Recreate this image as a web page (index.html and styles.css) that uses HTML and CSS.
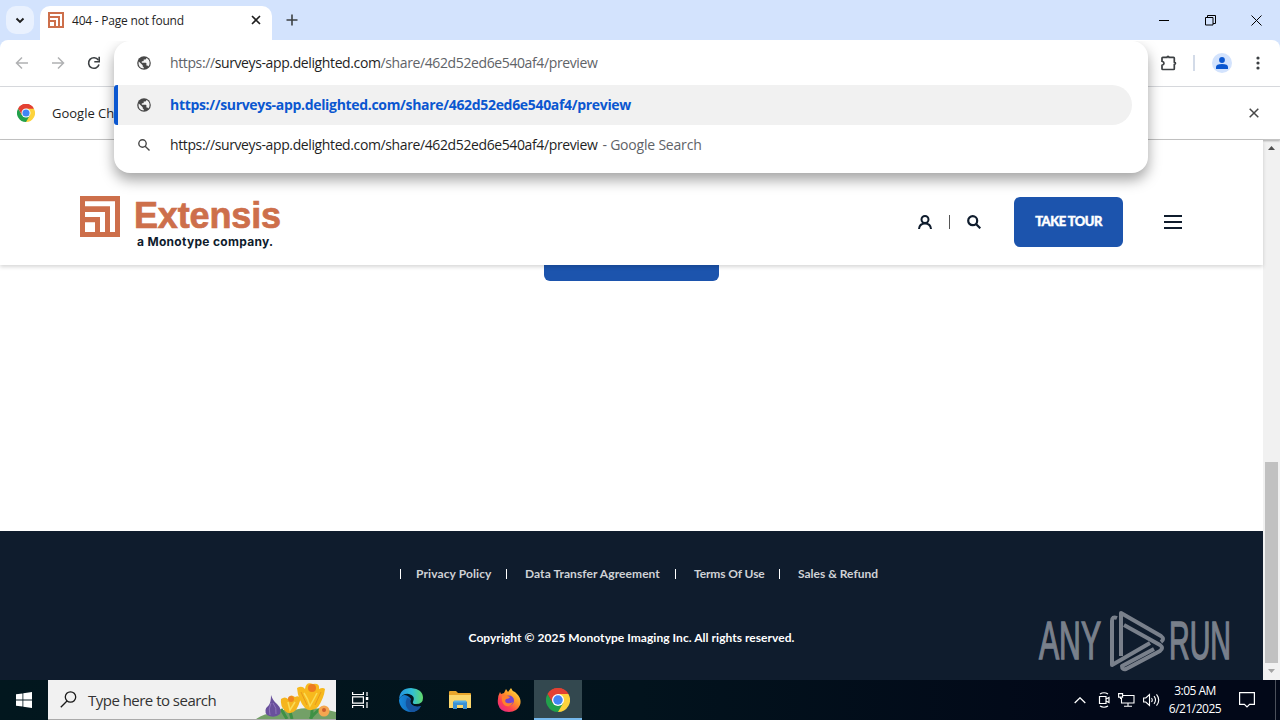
FILE: index.html
```html
<!DOCTYPE html>
<html lang="en">
<head>
    <meta charset="utf-8">
    <title>404 - Page not found</title>
    <link rel="stylesheet" href="styles.css">
</head>
<body>
    <div class="tabstrip">
        <button class="tab-search" aria-label="Search tabs">
            <svg width="10" height="7" viewBox="0 0 10 7"><path d="M1.5 1.5 5 5l3.500-3.500" fill="none" stroke="#1f1f1f" stroke-width="1.900"/></svg>
        </button>
        <div class="tab">
            <svg class="favicon" width="16" height="16" viewBox="0 0 40 40"><path d="M0 0h40v40H0z" fill="#cd6f4b"/><path d="M5 5h30v30h-5V10H5zM5 15h20v20h-5V20H5zM5 25h10v10H5z" fill="#fff"/></svg>
            <span class="tab-title">404 - Page not found</span>
            <svg class="tab-close" width="10" height="10" viewBox="0 0 10 10"><path d="M1 1l8 8M9 1 1 9" stroke="#1f1f1f" stroke-width="1.600"/></svg>
        </div>
        <svg class="new-tab" width="12" height="12" viewBox="0 0 12 12"><path d="M6 .5v11M.5 6h11" stroke="#3c4043" stroke-width="1.600"/></svg>
        <div class="window-buttons">
            <svg width="11" height="11" viewBox="0 0 11 11"><path d="M0 5.500h10" stroke="#000"/></svg>
            <svg width="11" height="11" viewBox="0 0 11 11"><path d="M.5 2.500h7.500v7.500H.5zM2.500 2.500v-2h8v8H8" fill="none" stroke="#000"/></svg>
            <svg width="11" height="11" viewBox="0 0 11 11"><path d="M.5.500l10 10M10.500.5l-10 10" stroke="#000"/></svg>
        </div>
    </div>

    <div class="toolbar">
        <div class="nav-buttons">
            <svg width="14" height="14" viewBox="0 0 14 14"><path d="M13 7H2M7 1.500 1.500 7 7 12.500" fill="none" stroke="#b0b1b3" stroke-width="1.500"/></svg>
            <svg width="14" height="14" viewBox="0 0 14 14"><path d="M1 7h11M7 1.500 12.500 7 7 12.500" fill="none" stroke="#b0b1b3" stroke-width="1.500"/></svg>
            <svg width="14" height="14" viewBox="0 0 14 14"><path d="M12 8.500A5.300 5.300 0 1 1 11.300 4" fill="none" stroke="#3c4043" stroke-width="1.600"/><path d="M12.200.7v5H7.300" fill="none" stroke="#3c4043" stroke-width="1.600"/></svg>
        </div>
        <div class="toolbar-right">
            <svg width="18" height="18" viewBox="0 0 18 18"><path d="M2.800 3.300h4.200q.2-1 1-1t1 1h4.500q.8 0 .8.800v4q1.200.2 1.200 1.200t-1.200 1.200v4.200q0 .8-.8.800H2.800q-.8 0-.8-.8v-3.400q2-.5 2-2T2 7.300V4.100q0-.8.800-.8z" fill="none" stroke="#3c4043" stroke-width="1.700"/></svg>
            <span class="toolbar-line"></span>
            <span class="avatar">
                <svg width="12" height="12" viewBox="0 0 12 12"><circle cx="6" cy="3" r="2.900" fill="#0b57d0"/><path d="M0 12v-2q0-3 6-3t6 3v2z" fill="#0b57d0"/></svg>
            </span>
            <svg width="4" height="14" viewBox="0 0 4 14" fill="#3c4043"><circle cx="2" cy="2" r="1.600"/><circle cx="2" cy="7" r="1.600"/><circle cx="2" cy="12" r="1.600"/></svg>
        </div>
    </div>

    <div class="infobar">
        <svg width="18" height="18" viewBox="0 0 48 48"><use href="#chrome"/></svg>
        <span class="infobar-text">Google Chrome</span>
        <svg class="infobar-close" width="10" height="10" viewBox="0 0 10 10"><path d="M.7.700l8.600 8.600M9.300.7.700 9.300" stroke="#474747" stroke-width="1.500"/></svg>
    </div>

    <div class="viewport">
        <div class="page">
            <header class="site-header">
                <div class="logo">
                    <svg width="40" height="41" viewBox="0 0 40 40" preserveAspectRatio="none"><path d="M0 0h40v40H0z" fill="#cd6f4b"/><path d="M5 5h30v30h-5V10H5zM5 15.500h20V35h-5V20.500H5zM5 25.500h10V35H5z" fill="#fff"/></svg>
                    <div class="logo-text">
                        <div class="logo-name">Extensis</div>
                        <div class="logo-tag">a Monotype company.</div>
                    </div>
                </div>
                <div class="site-actions">
                    <svg width="14" height="14" viewBox="0 0 14 14" fill="none" stroke="#0f1c2d" stroke-width="2"><circle cx="7" cy="4.500" r="3.500"/><path d="M1 14q.5-5.500 6-5.500t6 5.500"/></svg>
                    <span class="action-line"></span>
                    <svg width="14" height="14" viewBox="0 0 14 14" fill="none" stroke="#0f1c2d" stroke-width="2.200"><circle cx="5.700" cy="5.700" r="4.500"/><path d="m9 9 4.300 4.300"/></svg>
                    <a class="tour">TAKE TOUR</a>
                    <svg class="burger" width="18" height="14" viewBox="0 0 18 14"><path d="M0 1h18M0 7h18M0 13h18" stroke="#0f1c2d" stroke-width="2"/></svg>
                </div>
            </header>
            <main class="not-found">
                <div class="home-button"></div>
            </main>
            <footer class="site-footer">
                <ul class="footer-links">
                    <li class="privacy">Privacy Policy</li>
                    <li class="transfer">Data Transfer Agreement</li>
                    <li class="terms">Terms Of Use</li>
                    <li class="refund">Sales &amp; Refund</li>
                </ul>
                <p class="copyright">Copyright © 2025 Monotype Imaging Inc. All rights reserved.</p>
            </footer>
        </div>
        <div class="scrollbar">
            <svg width="7" height="4" viewBox="0 0 7 4"><path d="M0 4 3.500 0 7 4z" fill="#505050"/></svg>
            <div class="thumb"></div>
            <svg width="7" height="4" viewBox="0 0 7 4"><path d="M0 0h7L3.500 4z" fill="#a3a3a3"/></svg>
        </div>
    </div>

    <div class="taskbar">
        <div class="start">
            <svg width="16" height="16" viewBox="0 0 16 16" fill="#fff"><path d="M0 2.300 6.500 1.400v6.200H0zM7.300 1.200 16 0v7.600H7.300zM0 8.400h6.500v6.200L0 13.700zM7.300 8.400H16V16l-8.700-1.200z"/></svg>
        </div>
        <div class="search">
            <svg width="17" height="17" viewBox="0 0 17 17" fill="none" stroke="#1a1a1a" stroke-width="1.300"><circle cx="10.500" cy="6" r="5.200"/><path d="M7 10 .8 16.200"/></svg>
            <span class="search-text">Type here to search</span>
            <svg class="flowers" width="80" height="39" viewBox="0 0 80 39">
                <path d="M0 39q8-6 20-6 7-5 18-3 16-5 42 2v7z" fill="#73a067"/>
                <path d="M36 39q-2-8-4-12M55 39q2-9 0-15M54 39q6-8 12-11M31 39l-6-10" fill="none" stroke="#3f9145" stroke-width="3"/>
                <path d="M15 15q2 6 6 9 5 5 3 10-6 5-13 1-4-5 2-10 2-3 2-10z" fill="#69509c"/>
                <path d="M15 23q-3 6-1 12M17 23q4 5 3 11" fill="none" stroke="#8f75bb"/>
                <path d="M25 19q4-3 7 0 2-6 7-2 3-2 6 1-2 7-5 12-6 6-11 1-5-5-4-12z" fill="#f5b51d"/>
                <path d="M41 8q5-3 8 1 1-8 8-5 7-1 6 5 4-2 6 0-1 9-7 18-7 6-13 1-7-8-8-20z" fill="#f7b91d"/>
                <path d="M48 13q4 6 6 13 4-7 7-13M32 22l2 8 5-8" fill="none" stroke="#fadb55" stroke-width="1.500"/>
                <path d="M45 12l6 13M65 12l-6 13" stroke="#e7981c"/>
                <circle cx="56" cy="8" r="4" fill="#ed7b20"/><circle cx="35" cy="19" r="3" fill="#ef8521"/>
                <circle cx="68" cy="31" r="5.500" fill="#f5a650"/><circle cx="68" cy="30" r="2" fill="#cd5f2d"/>
            </svg>
        </div>
        <div class="apps">
            <div class="app">
                <svg width="17" height="16" viewBox="0 0 17 16" fill="none" stroke="#fff" stroke-width="1.200"><path d="M.6 0v2.500h10.800V0M.6 16v-2.500h10.800V16M.6 4.800h10.800v6.400H.6zM15 0v4M15 10v6"/><path d="M13.800 5h2.500v3h-2.500z" fill="#fff" stroke="none"/></svg>
            </div>
            <div class="app">
                <svg width="24" height="24" viewBox="0 0 24 24">
                    <defs>
                        <linearGradient id="edgeTop" x1="0" x2="1"><stop offset="0" stop-color="#2390df"/><stop offset=".55" stop-color="#31bfd5"/><stop offset="1" stop-color="#62d969"/></linearGradient>
                        <linearGradient id="edgeBottom" x1="0" x2="1"><stop offset="0" stop-color="#1689dc"/><stop offset="1" stop-color="#104f9e"/></linearGradient>
                    </defs>
                    <path d="M0 12C0 17 4 24 12 24q7 0 10-6-5 2-9-1-3-3-1-6-3-4-7-4-4 1-5 5z" fill="url(#edgeBottom)"/>
                    <path d="M0 11Q1 0 12 0q12 1 12 10 0 6-7 6-4 0-3-2 3-6-4-8Q4 5 0 11z" fill="url(#edgeTop)"/>
                    <path d="M8 10q-4 8 4 14 7 0 10-6-5 2-9-1-3-3-1-6z" fill="#16549f"/>
                </svg>
            </div>
            <div class="app">
                <svg width="22" height="19" viewBox="0 0 22 19"><path d="M0 1q0-1 1-1h6l2 2h12q1 0 1 1v14H0z" fill="#e9a62c"/><path d="M0 4h22v13H0z" fill="#fcd76c"/><path d="M4 10.500h14V18h-4v-4H8v4H4z" fill="#3c91d3"/><path d="M5 9.500h12v2H5z" fill="#57b0e7"/></svg>
            </div>
            <div class="app">
                <svg width="24" height="24" viewBox="0 0 24 24">
                    <defs><linearGradient id="fox" x1="1" y1="0" x2=".2" y2="1"><stop offset="0" stop-color="#fff14b"/><stop offset=".45" stop-color="#ff9628"/><stop offset=".75" stop-color="#ff4051"/><stop offset="1" stop-color="#e52885"/></linearGradient></defs>
                    <path d="M3 4l1 2 3-1 2-4 2 3 3-4q1 3 4 4l2 2q5 5 3 11-3 7-11 7-9 0-11-8Q0 9 3 4z" fill="url(#fox)"/>
                    <circle cx="12" cy="12.500" r="5" fill="#7544cf"/><path d="M5 8q5-1 8 1-1 2-4 2-2 3 1 4 3 1 6-1-2 5-7 4-5-2-4-10z" fill="#ff812b"/>
                </svg>
            </div>
            <div class="app active">
                <svg width="24" height="24" viewBox="0 0 48 48">
                    <g id="chrome">
                        <path d="M24 24 3.200 12A24 24 0 0 1 44.800 12z" fill="#e34133"/>
                        <path d="M24 24V12h20.800A24 24 0 0 1 24 48z" fill="#fdd33c"/>
                        <path d="M24 24 34.400 30 24 48A24 24 0 0 1 3.200 12L13.600 30z" fill="#22a04b"/>
                        <path d="M3.200 12A24 24 0 0 1 44.800 12H24L13.600 30z" fill="#e34133"/>
                        <circle cx="24" cy="24" r="12" fill="#fff"/><circle cx="24" cy="24" r="9.500" fill="#4285f4"/>
                    </g>
                </svg>
            </div>
        </div>
        <div class="tray">
            <svg width="12" height="7" viewBox="0 0 12 7"><path d="m.7 6 5.300-5.200L11.300 6" fill="none" stroke="#fff" stroke-width="1.300"/></svg>
            <svg width="12" height="16" viewBox="0 0 12 16" fill="none" stroke="#fff" stroke-width="1.200"><path d="M2 2q4-2.500 8 0M2 14q4 2.500 8 0M1.500 4.500h6.500v7H1.500zM8 7l3-1.500v5L8 9"/></svg>
            <svg width="17" height="14" viewBox="0 0 17 14" fill="none" stroke="#fff" stroke-width="1.100"><path d="M5 2.500h11v7.500H3.500V5M10 10v3M6 13.300h8M.6.600h4v3.500h-4zM2.500 4v2"/></svg>
            <svg width="17" height="14" viewBox="0 0 17 14" fill="none" stroke="#fff" stroke-width="1.100"><path d="M.6 5h2.200L6.500 1.500v11L2.800 9H.6zM8.500 5q1.500 2 0 4M11 3.200q3 3.800 0 7.600M13.500 1.400q4.500 5.600 0 11.200"/></svg>
            <div class="clock"><div class="time">3:05 AM</div><div class="date">6/21/2025</div></div>
            <svg class="notice" width="16" height="16" viewBox="0 0 16 16"><path d="M.6.600h14.800v11.800h-4.800L8 15l-2.600-2.600H.6z" fill="none" stroke="#fff" stroke-width="1.200"/></svg>
            <span class="desktop-edge"></span>
        </div>
    </div>

    <div class="omnibox">
        <div class="omnibox-row input-row">
            <svg class="globe" width="14" height="14" viewBox="0 0 14 14"><use href="#globe"/></svg>
            <span class="url muted">https://<span class="dark">surveys-app.delighted.com</span>/share/462d52ed6e540af4/preview</span>
        </div>
        <div class="omnibox-row selected">
            <svg class="globe" width="14" height="14" viewBox="0 0 14 14">
                <g id="globe"><circle cx="7" cy="7" r="6.800" fill="#474747"/><path d="M1.800 5.500 5.700 9.300v1q0 .8 1 .8v1.400Q1.500 12 1.500 7zM9.300 1.900q3.300 1.300 3.300 5 0 2-1.200 3.500-.4-.9-1.400-.9h-.6V7.300q0-.6-.7-.6H4.800V5.300h1.300q.6 0 .6-.7V3.400h1.300q1.300 0 1.300-1.500z" fill="#f4f4f4"/></g>
            </svg>
            <span class="url bold">https://surveys-app.delighted.com/share/462d52ed6e540af4/preview</span>
        </div>
        <div class="omnibox-row">
            <svg class="globe" width="14" height="14" viewBox="0 0 14 14" fill="none" stroke="#474747" stroke-width="1.400"><circle cx="5.500" cy="5.500" r="3.700"/><path d="m8.200 8.200 4.300 4.300"/></svg>
            <span class="url dark">https://surveys-app.delighted.com/share/462d52ed6e540af4/preview</span>
            <span class="engine">- Google Search</span>
        </div>
    </div>

    <svg class="watermark" width="210" height="64" viewBox="0 0 210 64">
        <text x="1" y="51" textLength="62" lengthAdjust="spacingAndGlyphs">ANY</text>
        <g fill="none" stroke="#858b96" stroke-width="4" stroke-linejoin="round">
            <path d="M79 10q-5-2-5 3v44L112 35"/>
            <path d="M83 48V5l40 23q4 3 0 6M86 17l36 20q4 3 0 6L88 61q-4 1-4-3l32-17"/>
        </g>
        <text x="131" y="51" textLength="62" lengthAdjust="spacingAndGlyphs">RUN</text>
    </svg>
</body>
</html>
```
FILE: styles.css
```css
* {
    box-sizing: border-box;
}
body {
    margin: 0;
    width: 1280px;
    height: 720px;
    overflow: hidden;
    display: flex;
    flex-direction: column;
    position: relative;
    font-family: "Open Sans", "Noto Sans", sans-serif;
    font-size: 14px;
    color: #1f1f1f;
    background: #fff;
}
svg {
    display: block;
    flex: none;
}

/* browser chrome */
.tabstrip {
    height: 40px;
    flex: none;
    display: flex;
    align-items: center;
    padding-left: 6px;
    background: #d3e3fd;
}
.tab-search {
    width: 28px;
    height: 28px;
    border: none;
    border-radius: 10px;
    padding: 0;
    background: #e9f1fe;
    display: flex;
    align-items: center;
    justify-content: center;
}
.tab {
    width: 232px;
    height: 34px;
    margin-left: 6px;
    align-self: flex-end;
    border-radius: 10px 10px 0 0;
    background: #fff;
    display: flex;
    align-items: center;
    padding: 0 11px 6px 8px;
}
.tab-title {
    margin-left: 8px;
    font-size: 12px;
    letter-spacing: -0.220px;
    white-space: nowrap;
}
.tab-close {
    margin-left: auto;
}
.new-tab {
    margin-left: 14px;
}
.window-buttons {
    margin-left: auto;
    margin-right: 18px;
    display: flex;
    gap: 35px;
}
.toolbar {
    height: 47px;
    flex: none;
    display: flex;
    align-items: center;
    justify-content: space-between;
    padding: 0 20px 0 15px;
    border-bottom: 1px solid #dadce0;
    border-radius: 8px 8px 0 0;
    background: #fff;
    box-shadow: 0 -10px 0 #d3e3fd;
    clip-path: inset(0);
}
.nav-buttons {
    display: flex;
    gap: 22px;
}
.toolbar-right {
    display: flex;
    align-items: center;
}
.toolbar-line {
    width: 2px;
    height: 16px;
    margin: 0 17px 0 15px;
    background: #d3dbe8;
}
.avatar {
    width: 20px;
    height: 20px;
    margin-right: 24px;
    border-radius: 50%;
    background: #d3e3fd;
    display: flex;
    align-items: center;
    justify-content: center;
}
.infobar {
    height: 53px;
    flex: none;
    display: flex;
    align-items: center;
    padding: 0 21px 0 17px;
    border-bottom: 1px solid #c4c4c4;
    box-shadow: 0 1px 2px #aaa;
    z-index: 1;
    background: #fff;
}
.infobar-text {
    margin-left: 17px;
    font-size: 13px;
}
.infobar-close {
    margin-left: auto;
}

/* address bar dropdown */
.omnibox {
    position: absolute;
    left: 114px;
    top: 41px;
    width: 1034px;
    height: 132px;
    border-radius: 16px;
    background: #fff;
    box-shadow: 0 7px 14px rgba(0, 0, 0, 0.360);
    clip-path: inset(0 -24px -24px -24px);
    z-index: 3;
}
.omnibox-row {
    height: 40px;
    display: flex;
    align-items: center;
    padding-left: 23px;
    white-space: nowrap;
}
.input-row {
    height: 44px;
}
.selected {
    margin-right: 16px;
    border-left: 4px solid #0b57d0;
    border-radius: 3px 20px 20px 3px;
    padding-left: 19px;
    background: #f1f1f1;
}
.url {
    margin-left: 19px;
    padding-bottom: 2px;
    font-size: 14px;
    letter-spacing: -0.385px;
}
.bold {
    font-weight: 700;
    color: #0b57d0;
    letter-spacing: -0.320px;
}
.dark {
    color: #1f1f1f;
}
.muted {
    color: #5f6368;
}
.engine {
    margin-left: 5px;
    padding-bottom: 2px;
    color: #5f6368;
    letter-spacing: -0.200px;
}

/* web page */
.viewport {
    flex: 1;
    display: flex;
    min-height: 0;
}
.page {
    flex: 1;
    display: flex;
    flex-direction: column;
}
.site-header {
    height: 125px;
    flex: none;
    display: flex;
    justify-content: space-between;
    padding: 56px 81px 0 80px;
    background: #fff;
    box-shadow: 0 2px 4px rgba(0, 0, 0, 0.160);
    z-index: 1;
}
.logo {
    display: flex;
}
.logo-text {
    margin-left: 14px;
    font-family: "Liberation Sans", Arial, sans-serif;
    font-weight: 700;
    white-space: nowrap;
}
.logo-name {
    font-size: 36px;
    line-height: 40px;
    letter-spacing: -0.150px;
    color: #cd6f4b;
    -webkit-text-stroke: 0.700px #cd6f4b;
}
.logo-tag {
    margin-left: 3px;
    font-family: Inter, sans-serif;
    font-size: 12px;
    line-height: 12px;
    letter-spacing: 0.300px;
    color: #0f1c2d;
}
.site-actions {
    height: 50px;
    margin-top: 1px;
    display: flex;
    align-items: center;
}
.action-line {
    width: 1px;
    height: 14px;
    margin: 0 17px;
    background: #555;
}
.tour {
    width: 109px;
    height: 50px;
    margin: 0 41px 0 33px;
    border-radius: 6px;
    background: #1c54ad;
    color: #fff;
    font: 900 13px/49px Lato, sans-serif;
    letter-spacing: -0.550px;
    text-align: center;
    -webkit-text-stroke: 0.400px #fff;
}
.not-found {
    flex: 1;
}
.home-button {
    width: 175px;
    height: 16px;
    margin: 0 auto;
    border-radius: 0 0 6px 6px;
    background: #1c54ad;
}
.site-footer {
    height: 149px;
    background: #0f1c2d;
    font-family: Lato, sans-serif;
    font-size: 12px;
    font-weight: 700;
}
.footer-links {
    display: flex;
    margin: 0;
    padding: 34px 0 0 400px;
    list-style: none;
    color: #cfd2d6;
    line-height: 18px;
    white-space: nowrap;
}
.footer-links li {
    display: flex;
    align-items: center;
}
.footer-links li::before {
    content: "";
    width: 1px;
    height: 10px;
    margin-right: 18px;
    background: #fff;
}
.footer-links .privacy::before {
    margin-right: 15px;
}
.privacy {
    width: 106px;
    letter-spacing: 0.100px;
}
.transfer {
    width: 169px;
    letter-spacing: 0.070px;
}
.terms {
    width: 104px;
    letter-spacing: -0.100px;
}
.copyright {
    margin: 46px 0 0;
    line-height: 18px;
    letter-spacing: 0.040px;
    text-align: center;
    color: #fff;
}
.scrollbar {
    width: 17px;
    background: #f1f1f1;
    display: flex;
    flex-direction: column;
    align-items: center;
    padding: 6px 0 7px;
}
.thumb {
    width: 13px;
    height: 201px;
    margin: auto 0 6px;
    background: #c1c1c1;
}
.watermark {
    position: absolute;
    left: 1038px;
    top: 608px;
    z-index: 2;
    font-family: "Liberation Sans", Arial, sans-serif;
    font-size: 53px;
    fill: #858b96;
    stroke: #858b96;
    stroke-width: 1.500px;
    opacity: 0.900;
}

/* taskbar */
.taskbar {
    height: 40px;
    flex: none;
    display: flex;
    background: linear-gradient(90deg, #02171e, #02131d 50%, #020818 85%);
    color: #fff;
}
.start {
    width: 48px;
    display: flex;
    align-items: center;
    justify-content: center;
}
.search {
    width: 288px;
    background: #f1f1f1;
    border-bottom: 1px solid #aaa;
    display: flex;
    align-items: center;
    padding-left: 12px;
}
.search-text {
    margin-left: 11px;
    font-size: 15px;
    letter-spacing: -0.520px;
    color: #333;
    white-space: nowrap;
}
.flowers {
    margin-left: auto;
}
.apps {
    display: flex;
}
.app {
    width: 49px;
    display: flex;
    align-items: center;
    justify-content: center;
}
.app:nth-child(2),
.app:nth-child(3),
.app:nth-child(4) {
    padding-left: 2px;
}
.app.active {
    width: 48px;
    margin-left: 2px;
    background: #33484f;
    border-bottom: 2px solid #76b9ed;
    padding-top: 2px;
}
.tray {
    margin-left: auto;
    display: flex;
    align-items: center;
    gap: 8px;
}
.tray svg:first-child {
    margin-right: 4px;
}
.clock {
    width: 60px;
    margin-left: -3px;
    font-size: 12px;
    line-height: 18px;
    letter-spacing: -0.500px;
    text-align: center;
    white-space: nowrap;
}
.notice {
    margin-left: 6px;
}
.desktop-edge {
    width: 1px;
    height: 40px;
    margin: 0 4px 0 12px;
    background: #4b505b;
}
```
